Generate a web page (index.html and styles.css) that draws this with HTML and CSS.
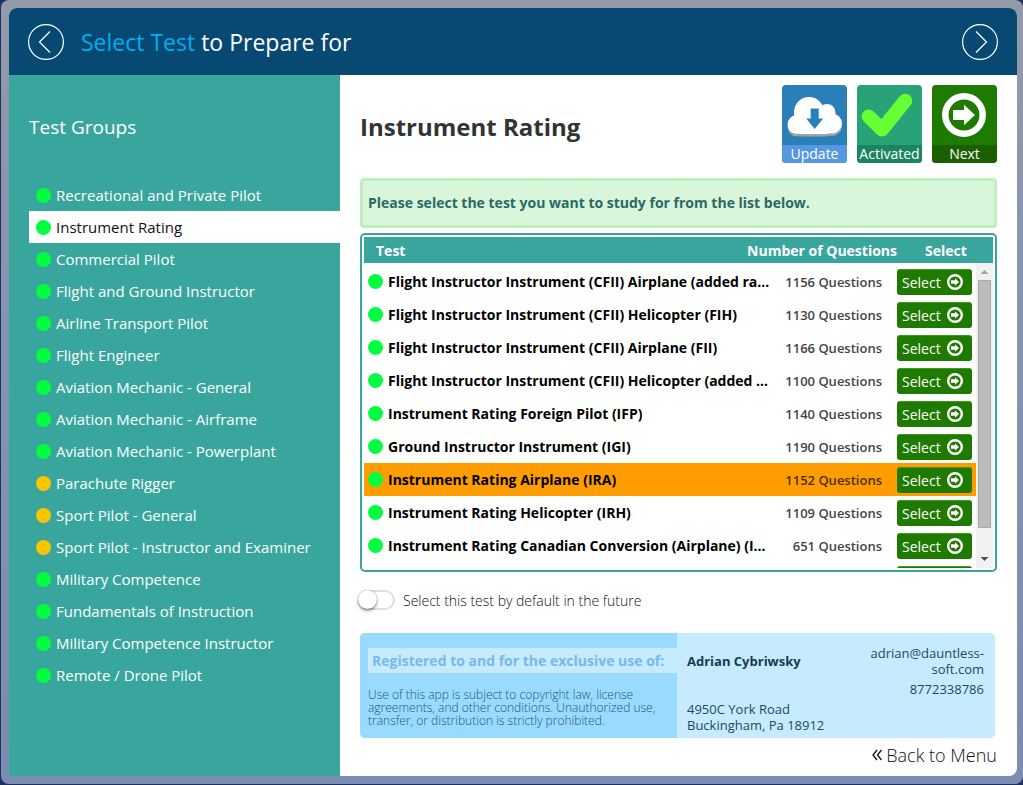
FILE: index.html
```html
<!DOCTYPE html>
<html lang="en">
<head>
    <meta charset="UTF-8">
    <meta name="viewport" content="width=device-width, initial-scale=1.0">
    <title>Select Test to Prepare for</title>
    <link rel="stylesheet" href="styles.css">
</head>
<body>
    <svg class="symbols" aria-hidden="true">
        <symbol id="arrow" viewBox="0 0 44 44">
            <circle cx="22" cy="22" r="18.700" fill="none" stroke="#fff" stroke-width="6.500"/>
            <path d="M11 17h11v-5.300L33 22 22 32.300V27H11z" fill="#fff"/>
        </symbol>
    </svg>

    <div class="frame">
        <div class="app">
            <header class="header">
                <button class="navBtn" aria-label="Previous">
                    <svg width="38" height="38" viewBox="0 0 38 38"><circle cx="19" cy="19" r="17.4"/><path d="M23 8.500 12.500 19 23 29.500"/></svg>
                </button>
                <h1 class="headerTitle"><span>Select Test</span> to Prepare for</h1>
                <button class="navBtn" aria-label="Next step">
                    <svg width="38" height="38" viewBox="0 0 38 38"><circle cx="19" cy="19" r="17.4"/><path d="M15 8.500 25.500 19 15 29.500"/></svg>
                </button>
            </header>

            <div class="body">
                <nav class="sidebar">
                    <h2 class="sidebarTitle">Test Groups</h2>
                    <ul class="groups">
                        <li><a href="#" class="group"><i class="dot"></i>Recreational and Private Pilot</a></li>
                        <li><a href="#" class="group active"><i class="dot"></i>Instrument Rating</a></li>
                        <li><a href="#" class="group"><i class="dot"></i>Commercial Pilot</a></li>
                        <li><a href="#" class="group"><i class="dot"></i>Flight and Ground Instructor</a></li>
                        <li><a href="#" class="group"><i class="dot"></i>Airline Transport Pilot</a></li>
                        <li><a href="#" class="group"><i class="dot"></i>Flight Engineer</a></li>
                        <li><a href="#" class="group"><i class="dot"></i>Aviation Mechanic - General</a></li>
                        <li><a href="#" class="group"><i class="dot"></i>Aviation Mechanic - Airframe</a></li>
                        <li><a href="#" class="group"><i class="dot"></i>Aviation Mechanic - Powerplant</a></li>
                        <li><a href="#" class="group"><i class="dot amber"></i>Parachute Rigger</a></li>
                        <li><a href="#" class="group"><i class="dot amber"></i>Sport Pilot - General</a></li>
                        <li><a href="#" class="group"><i class="dot amber"></i>Sport Pilot - Instructor and Examiner</a></li>
                        <li><a href="#" class="group"><i class="dot"></i>Military Competence</a></li>
                        <li><a href="#" class="group"><i class="dot"></i>Fundamentals of Instruction</a></li>
                        <li><a href="#" class="group"><i class="dot"></i>Military Competence Instructor</a></li>
                        <li><a href="#" class="group"><i class="dot"></i>Remote / Drone Pilot</a></li>
                    </ul>
                </nav>

                <main class="content">
                    <div class="top">
                        <h2 class="title">Instrument Rating</h2>
                        <div class="tiles">
                            <button class="tile update">
                                <svg viewBox="0 0 65 60">
                                    <g fill="#a3a3a0" transform="translate(0 3)"><circle cx="15" cy="39" r="9.500"/><circle cx="50" cy="38" r="10"/><circle cx="27" cy="27" r="15"/><circle cx="45" cy="27" r="8.500"/><rect x="12" y="28" width="40" height="20.500" rx="8"/></g>
                                    <g fill="#fff"><circle cx="15" cy="39.500" r="9.500"/><circle cx="50" cy="38.500" r="10"/><circle cx="27" cy="27" r="15"/><circle cx="45" cy="27.500" r="8.500"/><rect x="12" y="28" width="40" height="21" rx="8"/></g>
                                    <path d="M28.700 23.500h8v10h4.500l-8.500 10.500-8.500-10.500h4.500z" fill="#2980b9"/>
                                </svg>
                                <span>Update</span>
                            </button>
                            <button class="tile activated">
                                <svg viewBox="0 0 65 60"><path d="M11.700 31.500 25 44.500 48.300 15.700" fill="none" stroke="#66ff33" stroke-width="14" stroke-linecap="round" stroke-linejoin="round"/></svg>
                                <span>Activated</span>
                            </button>
                            <button class="tile next">
                                <svg viewBox="0 0 65 60"><use href="#arrow" x="10" y="8" width="44" height="44"/></svg>
                                <span>Next</span>
                            </button>
                        </div>
                    </div>

                    <p class="notice">Please select the test you want to study for from the list below.</p>

                    <div class="testsBox">
                        <table class="tests">
                            <thead>
                                <tr><th class="name">Test</th><th class="count">Number of Questions</th><th class="pick">Select</th></tr>
                            </thead>
                            <tbody>
                                <tr><td class="name"><i class="dot"></i><b>Flight Instructor Instrument (CFII) Airplane (added rating)</b></td><td class="count">1156 Questions</td><td class="pick"><button class="selectBtn">Select <svg><use href="#arrow"/></svg></button></td></tr>
                                <tr><td class="name"><i class="dot"></i><b>Flight Instructor Instrument (CFII) Helicopter (FIH)</b></td><td class="count">1130 Questions</td><td class="pick"><button class="selectBtn">Select <svg><use href="#arrow"/></svg></button></td></tr>
                                <tr><td class="name"><i class="dot"></i><b>Flight Instructor Instrument (CFII) Airplane (FII)</b></td><td class="count">1166 Questions</td><td class="pick"><button class="selectBtn">Select <svg><use href="#arrow"/></svg></button></td></tr>
                                <tr><td class="name"><i class="dot"></i><b>Flight Instructor Instrument (CFII) Helicopter (added rating)</b></td><td class="count">1100 Questions</td><td class="pick"><button class="selectBtn">Select <svg><use href="#arrow"/></svg></button></td></tr>
                                <tr><td class="name"><i class="dot"></i><b>Instrument Rating Foreign Pilot (IFP)</b></td><td class="count">1140 Questions</td><td class="pick"><button class="selectBtn">Select <svg><use href="#arrow"/></svg></button></td></tr>
                                <tr><td class="name"><i class="dot"></i><b>Ground Instructor Instrument (IGI)</b></td><td class="count">1190 Questions</td><td class="pick"><button class="selectBtn">Select <svg><use href="#arrow"/></svg></button></td></tr>
                                <tr class="selected"><td class="name"><i class="dot"></i><b>Instrument Rating Airplane (IRA)</b></td><td class="count">1152 Questions</td><td class="pick"><button class="selectBtn">Select <svg><use href="#arrow"/></svg></button></td></tr>
                                <tr><td class="name"><i class="dot"></i><b>Instrument Rating Helicopter (IRH)</b></td><td class="count">1109 Questions</td><td class="pick"><button class="selectBtn">Select <svg><use href="#arrow"/></svg></button></td></tr>
                                <tr><td class="name"><i class="dot"></i><b>Instrument Rating Canadian Conversion (Airplane) (ICP)</b></td><td class="count">651 Questions</td><td class="pick"><button class="selectBtn">Select <svg><use href="#arrow"/></svg></button></td></tr>
                                <tr><td class="name"><i class="dot"></i></td><td class="count"></td><td class="pick"><button class="selectBtn" aria-label="Select"><svg><use href="#arrow"/></svg></button></td></tr>
                            </tbody>
                        </table>
                        <div class="scrollbar" aria-hidden="true">
                            <svg width="17" height="17" viewBox="0 0 17 17"><path d="M8.500 7 12.500 11h-8z" fill="#a3a3a3"/></svg>
                            <div class="thumb"></div>
                            <svg width="17" height="17" viewBox="0 0 17 17"><path d="M4.500 6h8l-4 4z" fill="#505050"/></svg>
                        </div>
                    </div>

                    <label class="default"><input type="checkbox" class="toggle">Select this test by default in the future</label>

                    <section class="license">
                        <div class="terms">
                            <h3>Registered to and for the exclusive use of:</h3>
                            <p>Use of this app is subject to copyright law, license agreements, and other conditions. Unauthorized use, transfer, or distribution is strictly prohibited.</p>
                        </div>
                        <div class="owner">
                            <div class="person">
                                <strong>Adrian Cybriwsky</strong>
                                <address>4950C York Road<br>Buckingham, Pa 18912</address>
                            </div>
                            <div class="contact">
                                <div>adrian@dauntless-<br>soft.com</div>
                                <div>8772338786</div>
                            </div>
                        </div>
                    </section>

                    <a href="#" class="back"><svg width="10" height="12" viewBox="0 0 10 12"><path d="M5 1 1 6l4 5M9.500 1l-4 5 4 5"/></svg>Back to Menu</a>
                </main>
            </div>
        </div>
    </div>
</body>
</html>
```
FILE: styles.css
```css
* {
    box-sizing: border-box;
}

body {
    margin: 0;
    padding: 0 0 1px 1px;
    min-height: 100vh;
    display: flex;
    background-color: #1f3160;
    font-family: "Open Sans", "Noto Sans", sans-serif;
    font-size: 14px;
    color: #333;
}

h1, h2, h3, p, ul {
    margin: 0;
    padding: 0;
}

button {
    border: 0;
    padding: 0;
    font: inherit;
    color: #fff;
    background: none;
    cursor: pointer;
}

a {
    text-decoration: none;
}

.symbols {
    position: absolute;
    width: 0;
    height: 0;
}

.frame {
    flex: 1;
    min-width: 0;
    display: flex;
    padding: 8px 6px 8px 8px;
    border-radius: 8px;
    background: linear-gradient(#949aa8, #8594b0 40%, #7c8cb0);
}

.app {
    flex: 1;
    min-width: 0;
    display: flex;
    flex-direction: column;
    border-radius: 8px 8px 8px 0;
    overflow: hidden;
    background-color: #fff;
}

.header {
    display: flex;
    align-items: center;
    gap: 16px;
    height: 67px;
    padding: 0 18px;
    background-color: #074973;
}

.headerTitle {
    flex: 1;
    font-size: 23px;
    font-weight: 400;
    color: #fff;
}

.headerTitle span {
    color: #00aeef;
}

.navBtn {
    width: 38px;
    height: 38px;
}

.navBtn svg {
    display: block;
    fill: none;
    stroke: #fff;
    stroke-width: 1.2;
}

.body {
    flex: 1;
    display: flex;
}

.sidebar {
    width: 331px;
    padding: 36px 0 0 20px;
    background-color: #39a69d;
}

.sidebarTitle {
    line-height: 32px;
    margin-bottom: 36px;
    font-size: 19px;
    font-weight: 400;
    color: #fff;
}

.groups {
    list-style: none;
}

.group {
    display: flex;
    align-items: center;
    gap: 5px;
    height: 32px;
    padding-left: 7px;
    font-size: 15px;
    color: #fff;
}

.group.active {
    background-color: #fff;
    color: #111;
}

.dot {
    flex: none;
    width: 15px;
    height: 15px;
    border-radius: 50%;
    background-color: #00ff40;
}

.dot.amber {
    background-color: #ffc400;
}

.content {
    flex: 1;
    min-width: 0;
    display: flex;
    flex-direction: column;
    padding: 10px 20px 8px;
}

.top {
    display: flex;
    align-items: center;
    justify-content: space-between;
}

.title {
    padding-top: 4px;
    font-size: 24px;
    font-weight: 700;
}

.tiles {
    display: flex;
    gap: 10px;
}

.tile {
    display: flex;
    flex-direction: column;
    width: 65px;
    height: 78px;
    border-radius: 4px;
    overflow: hidden;
}

.tile svg {
    width: 65px;
    height: 60px;
}

.tile span {
    width: 100%;
    line-height: 18px;
}

.update {
    background-color: #2980b9;
}

.update span {
    background-color: #5597e0;
}

.activated {
    background-color: #2aa277;
}

.activated span {
    background-color: #1a8560;
}

.next {
    background-color: #1f7a00;
}

.next span {
    background-color: #1b6000;
}

.notice {
    margin-top: 15px;
    padding: 0 5px;
    line-height: 44px;
    border: 3px solid #bdf0bd;
    border-radius: 4px;
    background-color: #d9f6da;
    font-weight: 700;
    color: #2b6966;
}

.testsBox {
    position: relative;
    margin-top: 5px;
    padding: 2px;
    border: 2px solid #39a69d;
    border-radius: 5px;
}

.tests {
    display: block;
}

.tests thead {
    display: block;
    padding-right: 17px;
    background-color: #39a69d;
    color: #fff;
}

.tests tbody {
    display: block;
    height: 305px;
    margin-right: 17px;
    padding: 2px 0;
    overflow-y: scroll;
}

.tests tbody::-webkit-scrollbar {
    display: none;
}

/* drawn over the right edge of the table body */
.scrollbar {
    position: absolute;
    top: 28px;
    right: 2px;
    bottom: 2px;
    width: 17px;
    display: flex;
    flex-direction: column;
    justify-content: space-between;
    background-color: #f1f1f1;
}

.thumb {
    height: 248px;
    margin: 0 2px auto;
    border: 1px solid #a8a8a8;
    background-color: #bcbcbc;
}

.tests tr {
    display: flex;
    align-items: center;
    height: 33px;
}

.tests thead tr {
    height: 26px;
}

.tests th,
.tests td {
    padding: 0;
}

.tests .name {
    flex: 1;
    min-width: 0;
    display: flex;
    align-items: center;
    gap: 5px;
    padding-left: 4px;
    color: #000;
}

.tests th.name {
    padding-left: 12px;
    color: #fff;
}

.name b {
    overflow: hidden;
    white-space: nowrap;
    text-overflow: ellipsis;
}

.tests .count {
    width: 127px;
    padding-right: 15px;
    text-align: right;
    font-size: 13px;
    font-weight: 600;
    color: #444;
}

.tests th.count {
    width: 160px;
    padding: 0;
    font-size: 14px;
    font-weight: 700;
    color: #fff;
}

.tests .pick {
    width: 79px;
}

.tests th.pick {
    padding-left: 28px;
    text-align: left;
}

.selected {
    background-color: #ff9c00;
}

.tests .selected .count {
    color: #4a3000;
}

.selectBtn {
    display: flex;
    align-items: center;
    justify-content: space-between;
    width: 75px;
    height: 26px;
    padding: 0 9px 0 5px;
    border-top: 1px solid #3a9a1c;
    border-radius: 3px;
    background-color: #1f7a00;
}

.selectBtn svg {
    width: 16px;
    height: 16px;
}

.default {
    display: flex;
    align-items: center;
    gap: 8px;
    height: 24px;
    margin-top: 16px;
    margin-left: -2px;
    font-weight: 300;
    color: #111;
}

.toggle {
    appearance: none;
    width: 37px;
    height: 20px;
    margin: 0;
    border: 2px solid #dfdfdf;
    border-radius: 10px;
    background-color: #fff;
}

.toggle::before {
    content: "";
    display: block;
    width: 19px;
    height: 19px;
    margin: -2px;
    border-radius: 50%;
    background-color: #fff;
    box-shadow: 0 2px 3px rgba(0, 0, 0, 0.4), 0 0 1px rgba(0, 0, 0, 0.5);
}

.license {
    display: flex;
    height: 105px;
    margin-top: 21px;
    margin-right: 2px;
    border-radius: 5px;
    overflow: hidden;
    background-color: #c6ebff;
    color: #1c4a66;
}

.terms {
    width: 317px;
    padding: 15px 0 0 8px;
    background-color: #99dbff;
}

.terms h3 {
    padding-left: 4px;
    line-height: 25px;
    background-color: #c6ebff;
    font-size: 14px;
    font-weight: 700;
    white-space: nowrap;
    color: #78b8ea;
}

.terms p {
    margin-top: 15px;
    padding-right: 16px;
    line-height: 13px;
    font-size: 12px;
    font-weight: 300;
    color: #1c5479;
}

.owner {
    flex: 1;
    display: flex;
    justify-content: space-between;
    padding: 12px 11px 5px 10px;
    line-height: 16px;
    font-size: 13px;
}

.person {
    display: flex;
    flex-direction: column;
    justify-content: space-between;
    padding-top: 8px;
}

.person strong {
    font-weight: 700;
    color: #173a52;
}

.person address {
    font-style: normal;
}

.contact {
    display: flex;
    flex-direction: column;
    gap: 4px;
    text-align: right;
}

.back {
    display: flex;
    align-items: center;
    align-self: flex-end;
    gap: 4px;
    margin-top: 4px;
    line-height: 26px;
    font-size: 18px;
    font-weight: 300;
    color: #111;
}

.back svg {
    fill: none;
    stroke: #111;
    stroke-width: 1.3;
}
```
